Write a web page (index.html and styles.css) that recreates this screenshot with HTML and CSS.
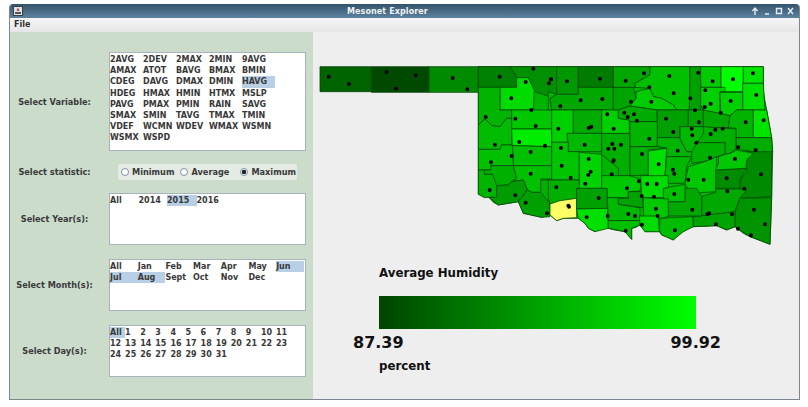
FILE: index.html
```html
<!DOCTYPE html>
<html lang="en">
<head>
<meta charset="utf-8">
<title>Mesonet Explorer</title>
<link rel="stylesheet" href="styles.css">
</head>
<body>
<div class="window">
  <header class="titlebar">
    <svg class="app-icon" width="10" height="10" viewBox="0 0 10 10"><rect x=".5" y=".5" width="9" height="9" fill="#dfe3e6" stroke="#3a3f44"/><path d="M5 1.800 6.500 4.800H3.500z" fill="#a33"/><path d="M2 6h6v2H2z" fill="#50565c"/></svg>
    <div class="title">Mesonet Explorer</div>
    <div class="controls">
      <svg width="46" height="10" viewBox="0 0 46 10"><g fill="none" stroke="#e6edf2" stroke-width="1.400"><path d="M4 9V3M1.500 5 4 2l2.500 3"/><path d="M14 8h4"/><path d="M25.500 2.500h5v5h-5z"/><path d="M37 2l5 6M42 2l-5 6"/></g></svg>
    </div>
  </header>
  <nav class="menubar"><span class="menu-item">File</span></nav>
  <main class="content">
    <section class="controls-panel">
      <div class="row row-variable">
        <div class="label">Select Variable:</div>
        <div class="list list-variable">
          <span>2AVG</span><span>2DEV</span><span>2MAX</span><span>2MIN</span><span>9AVG</span>
          <span>AMAX</span><span>ATOT</span><span>BAVG</span><span>BMAX</span><span>BMIN</span>
          <span>CDEG</span><span>DAVG</span><span>DMAX</span><span>DMIN</span><span class="sel">HAVG</span>
          <span>HDEG</span><span>HMAX</span><span>HMIN</span><span>HTMX</span><span>MSLP</span>
          <span>PAVG</span><span>PMAX</span><span>PMIN</span><span>RAIN</span><span>SAVG</span>
          <span>SMAX</span><span>SMIN</span><span>TAVG</span><span>TMAX</span><span>TMIN</span>
          <span>VDEF</span><span>WCMN</span><span>WDEV</span><span>WMAX</span><span>WSMN</span>
          <span>WSMX</span><span>WSPD</span>
        </div>
      </div>
      <div class="row row-stat">
        <div class="label">Select statistic:</div>
        <div class="radios">
          <span class="radio"><i class="dot"></i>Minimum</span>
          <span class="radio"><i class="dot"></i>Average</span>
          <span class="radio"><i class="dot on"></i>Maximum</span>
        </div>
      </div>
      <div class="row row-list">
        <div class="label">Select Year(s):</div>
        <div class="list list-year">
          <span>All</span><span>2014</span><span class="sel">2015</span><span>2016</span>
        </div>
      </div>
      <div class="row row-list">
        <div class="label">Select Month(s):</div>
        <div class="list list-month">
          <span>All</span><span>Jan</span><span>Feb</span><span>Mar</span><span>Apr</span><span>May</span><span class="sel">Jun</span>
          <span class="sel">Jul</span><span class="sel">Aug</span><span>Sept</span><span>Oct</span><span>Nov</span><span>Dec</span>
        </div>
      </div>
      <div class="row row-list">
        <div class="label">Select Day(s):</div>
        <div class="list list-day">
          <span class="sel">All</span><span>1</span><span>2</span><span>3</span><span>4</span><span>5</span><span>6</span><span>7</span><span>8</span><span>9</span><span>10</span><span>11</span>
          <span>12</span><span>13</span><span>14</span><span>15</span><span>16</span><span>17</span><span>18</span><span>19</span><span>20</span><span>21</span><span>22</span><span>23</span>
          <span>24</span><span>25</span><span>26</span><span>27</span><span>28</span><span>29</span><span>30</span><span>31</span>
        </div>
      </div>
    </section>
    <section class="map-panel">
      <svg class="map" width="480" height="200" viewBox="315 60 480 200">
        <g transform="translate(550 55) scale(.33333)" class="counties">
          <path fill="#00b400" d="M-215 35H640V110L665 248L668 290L665 428L660 568L630 556L600 545L580 535L555 515L530 525L500 512L430 515L415 520L400 530L385 535L370 555L350 545L335 540L328 530H285L270 510L255 518L245 520L245 553L225 530L195 525L175 520L155 515L135 530L115 520L105 505L85 490L40 490L20 497L0 480L-25 487L-80 475L-95 440L-125 445L-155 450L-170 442L-183 427L-215 418z"/>
        </g>
        <g transform="translate(315 55) scale(.33333)" class="counties">
          <path fill="#006400" d="M15 35H169V110H15z"/>
          <path fill="#004a00" d="M169 35H342V112H169z"/>
          <path fill="#008a00" d="M342 35H490V112H342z"/>
          <path fill="#008000" d="M490 35H585L605 65V97H490z"/>
          <path fill="#009000" d="M585 35H740V130L720 130L658 110L640 68H605V65z"/>
          <path fill="#00dc00" d="M555 97H605V68H640L658 105L655 165H555z"/>
          <path fill="#00b400" d="M490 97H555V165L590 165V190H575L555 215L530 212L510 192L490 210z"/>
          <path fill="#00bc00" d="M490 210L510 192L530 212L555 215L575 190H590V270H560L555 283H490z"/>
          <path fill="#00c800" d="M590 165H710V222L590 222z"/>
          <path fill="#00ec00" d="M590 222H710V275L592 272z"/>
          <path fill="#00c000" d="M592 272L710 275V332H595z"/>
          <path fill="#00c000" d="M490 283H555L560 270H592L595 332H527V345H490z"/>
          <path fill="#00b000" d="M527 332H595L605 370L578 390L545 392L535 385L533 358H508V345H527z"/>
          <path fill="#00b400" d="M490 345H508V358H533L545 392V427H522L508 428L490 418z"/>
          <path fill="#00c000" d="M595 332H710V372H677V412H650L637 405L625 375L590 380L605 370z"/>
          <path fill="#009c00" d="M545 392L578 390L590 380L625 375L637 405L610 440L580 445L550 450L522 427H545z"/>
          <path fill="#00a000" d="M637 405L650 412H677L705 430V485L680 487L625 475L610 440z"/>
          <path fill="#00b000" d="M677 375H740V432L705 445L677 412z"/>
        </g>
        <g transform="translate(550 55) scale(.33333)" class="counties">
          <path fill="#00b400" d="M-5 110L20 118H85V165H5L-5 165z"/>
          <path fill="#009800" d="M20 35H85V118H20z"/>
          <path fill="#007c00" d="M85 35H190V97H85z"/>
          <path fill="#00a800" d="M20 118H85V97H190V165H5L0 130z"/>
          <path fill="#00d000" d="M5 165H70V235H52V262H5z"/>
          <path fill="#00ac00" d="M70 165H155V235H70z"/>
          <path fill="#00b800" d="M52 235H155V290H55z"/>
          <path fill="#00c400" d="M5 262H55V290H88V375H5z"/>
          <path fill="#00b000" d="M-5 375H88V400H80V430L0 447L-5 432z"/>
          <path fill="#ffff66" d="M0 447L30 437L80 430V488L40 490L20 497L10 488L0 480z"/>
          <path fill="#00d400" d="M88 292L155 298V400H88z"/>
          <path fill="#00a000" d="M80 400H172V460L80 462z"/>
          <path fill="#00e000" d="M80 462L172 460L175 520L135 530L115 520L105 505L85 490z"/>
          <path fill="#00b000" d="M155 235H240V362H205V340L155 298z"/>
          <path fill="#00d000" d="M155 165H205V190L238 195V235H155z"/>
          <path fill="#00c800" d="M155 362H205L240 362L275 375L270 408L235 410V428H172V400H155z"/>
          <path fill="#00b800" d="M172 428H205V448L270 458V497H175z"/>
          <path fill="#00c000" d="M175 497H270V510L245 520L245 553L225 530L175 520z"/>
          <path fill="#00a400" d="M205 430H235V410H275L280 458L205 448z"/>
          <path fill="#00a400" d="M190 97H250L258 130V150L240 153L205 165H190z"/>
          <path fill="#00a800" d="M190 35H300V60L255 85V97H190z"/>
          <path fill="#00c000" d="M300 35H420L418 165H380L370 150L335 130L310 125L300 100L255 97V85L300 60z"/>
          <path fill="#00cc00" d="M258 110L300 100L310 125L335 130L370 150L380 165H320L240 153L258 130z"/>
          <path fill="#00ac00" d="M205 165L240 153L320 165L322 200H240L238 195L205 190z"/>
          <path fill="#00a000" d="M420 35H452V165H418z"/>
          <path fill="#00cc00" d="M452 35H513V97H452z"/>
          <path fill="#00ff00" d="M513 35H580V85L578 110H513z"/>
          <path fill="#00e400" d="M580 35H640V85H580z"/>
          <path fill="#00e000" d="M578 85H640L645 165H578z"/>
          <path fill="#00d000" d="M452 97H525V110H510V178L460 165L452 150z"/>
          <path fill="#00d000" d="M510 112H578V165L560 165L540 182L512 178z"/>
          <path fill="#00a000" d="M322 165H415V215H390L388 248H322z"/>
          <path fill="#00a800" d="M415 165H460V215H415z"/>
          <path fill="#00a800" d="M460 165L510 175L540 182L535 218H460z"/>
          <path fill="#00b400" d="M540 182L560 165H610V248H558V220L535 218z"/>
          <path fill="#00e400" d="M610 165H650L665 248H610z"/>
          <path fill="#00ac00" d="M558 248H665L668 290L640 300L610 290L580 285L560 285z"/>
          <path fill="#00b400" d="M240 200H322V275L240 275z"/>
          <path fill="#00b400" d="M322 248H388L410 290H425V305H350V280L322 275z"/>
          <path fill="#00b800" d="M390 215H460L465 235L442 290H410L390 250z"/>
          <path fill="#00b000" d="M460 215L558 222V280L540 295L525 298V263H442L460 235z"/>
          <path fill="#00b000" d="M425 290L442 263H525V298L500 305L470 318L425 325z"/>
          <path fill="#00b000" d="M240 275H322L350 280L295 285V360L240 362z"/>
          <path fill="#00e000" d="M295 288L350 280L345 365H295z"/>
          <path fill="#00b800" d="M350 305H425L410 335L405 385H345V362z"/>
          <path fill="#00c800" d="M415 335L470 318L500 305L497 410L420 415L405 385z"/>
          <path fill="#008a00" d="M590 290H665V425L570 430L570 375L590 350z"/>
          <path fill="#008c00" d="M497 345L588 340L570 375V400H497z"/>
          <path fill="#00c800" d="M505 305L525 298L540 295L560 285L610 295L590 315L588 340L497 345L505 325z"/>
          <path fill="#00a800" d="M497 402H570L590 405L570 430L555 470L455 485V425L497 412z"/>
          <path fill="#009400" d="M570 430L665 428L660 568L600 545L555 515V470z"/>
          <path fill="#00a400" d="M430 485L555 470V515L530 525L500 512L430 515z"/>
          <path fill="#00bc00" d="M330 490L428 485L430 515L400 530L370 555L335 540L328 525z"/>
          <path fill="#00a800" d="M355 440H405V400H440L455 425V483H355z"/>
          <path fill="#00c000" d="M340 400L405 388V440H340z"/>
          <path fill="#00dc00" d="M272 362H355V398L340 400V428H275z"/>
          <path fill="#00c800" d="M280 428L355 432V485L330 490L280 483z"/>
          <path fill="#00dc00" d="M268 483H325L328 530H285L270 510z"/>
        </g>
        <g transform="translate(315 55) scale(.33333)" class="dots">
          <path d="M41 65h0M102 87h0M215 51h0M302 61h0M243 101h0M413 69h0M457 103h0M554 65h0M655 41h0M708 73h0M702 85h0M632 81h0M589 130h0M649 165h0M512 186h0M601 191h0M662 213h0M540 269h0M613 261h0M690 272h0M647 291h0M590 303h0M528 322h0M647 356h0M524 405h0M601 421h0M632 443h0M696 475h0"/>
        </g>
        <g transform="translate(550 55) scale(.33333)" class="dots">
          <path d="M3 73h0M51 79h0M150 71h0M227 77h0M282 55h0M358 63h0M445 53h0M488 79h0M549 73h0M609 55h0M298 97h0M371 115h0M466 106h0M92 136h0M157 132h0M243 140h0M304 140h0M421 130h0M482 146h0M464 156h0M542 138h0M619 120h0M31 154h0M435 166h0M512 173h0M172 178h0M223 173h0M233 186h0M252 178h0M261 197h0M348 191h0M447 202h0M587 202h0M641 196h0M25 221h0M116 219h0M124 215h0M191 221h0M370 231h0M425 221h0M427 241h0M482 237h0M496 224h0M518 221h0M298 251h0M104 269h0M187 267h0M213 269h0M175 281h0M193 281h0M439 263h0M33 279h0M276 297h0M383 287h0M565 277h0M617 285h0M116 312h0M191 316h0M190 319h0M480 308h0M555 312h0M35 332h0M326 328h0M369 344h0M373 356h0M122 350h0M115 360h0M185 358h0M62 368h0M415 374h0M461 374h0M530 370h0M633 358h0M267 379h0M106 386h0M292 387h0M320 387h0M19 397h0M231 400h0M583 401h0M532 409h0M373 417h0M275 423h0M312 425h0M146 429h0M55 452h0M57 455h0M318 461h0M427 464h0M478 475h0M472 478h0M546 478h0M612 464h0M235 477h0M255 483h0M173 483h0M110 487h0M323 483h0M276 509h0M498 508h0M645 508h0M564 521h0M227 527h0M375 526h0M603 541h0"/>
        </g>
      </svg>
      <div class="legend">
        <div class="legend-title">Average Humidity</div>
        <div class="legend-bar"></div>
        <div class="legend-values"><span>87.39</span><span>99.92</span></div>
        <div class="legend-unit">percent</div>
      </div>
    </section>
  </main>
</div>
</body>
</html>
```

FILE: styles.css
```css
* { box-sizing: border-box; }
html, body { margin: 0; padding: 0; background: #fff; }
body { width: 808px; height: 407px; overflow: hidden; font-family: "DejaVu Sans", sans-serif; }

.window {
  width: 791px;
  height: 396px;
  margin: 4px 0 0 9px;
  border: 1px solid #7d868c;
  border-top: 0;
  border-radius: 4px 4px 0 0;
  display: flex;
  flex-direction: column;
  overflow: hidden;
}

.titlebar {
  height: 14px;
  flex: none;
  background: linear-gradient(#33536b, #5d829e);
  display: flex;
  align-items: center;
  padding-left: 3px;
}
.app-icon { display: block; }
.title {
  margin-left: 324px;
  font-size: 8px;
  font-weight: 700;
  color: #eef2f5;
  letter-spacing: .1px;
  white-space: nowrap;
}
.controls { margin-left: auto; margin-right: 2px; height: 10px; }
.controls svg { display: block; }

.menubar {
  height: 14px;
  flex: none;
  background: linear-gradient(#f6f6f6, #e6e6e6);
  padding-left: 4px;
  font-size: 8px;
  font-weight: 700;
  line-height: 13px;
  color: #333;
}

.content { flex: 1; display: flex; min-height: 0; }

.controls-panel {
  width: 303px;
  flex: none;
  background: #cbdccb;
  padding-top: 20px;
  display: flex;
  flex-direction: column;
}
.row { display: grid; grid-template-columns: 89px 197px; column-gap: 10px; align-items: center; }
.row-variable { height: 99px; }
.row-stat { height: 16px; margin-top: 13px; }
.row-list { height: 52px; margin-top: 14px; }
.row-stat + .row-list { margin-top: 13px; }
.label { text-align: center; font-size: 8.200px; font-weight: 700; color: #3a3a3a; white-space: nowrap; }

.list {
  height: 100%;
  background: #fff;
  border: 1px solid #a8b4bd;
  padding: 1px 0 0 0;
  display: grid;
  grid-auto-rows: 11.200px;
  align-content: start;
  font-size: 8px;
  font-weight: 700;
  color: #383838;
  line-height: 11px;
}
.list span { white-space: nowrap; }
.list .sel { background: #b8cfe5; }
.list-variable { grid-template-columns: repeat(5, 33px); }
.list-year { grid-template-columns: 28.500px 28.500px 29.500px 29.500px; }
.list-month { grid-template-columns: repeat(7, 27.700px); }
.list-day { grid-template-columns: repeat(12, 15.100px); }

.radios {
  margin-left: 9px;
  width: 179px;
  height: 16px;
  background: #e3ebe3;
  border-radius: 2px;
  display: flex;
  align-items: center;
  gap: 6px;
  padding-left: 3px;
  font-size: 8.200px;
  font-weight: 700;
  color: #3a3a3a;
}
.radio { display: flex; align-items: center; gap: 3px; white-space: nowrap; }
.radio:last-child { margin-left: 5px; }
.dot {
  width: 8px;
  height: 8px;
  border-radius: 50%;
  border: 1px solid #7d93a8;
  background: #fff;
  display: block;
}
.dot.on { background: radial-gradient(circle, #222 0 2px, #fff 2.600px); }

.map-panel {
  flex: 1;
  background: #eee;
  padding: 0 0 0 2px;
  display: flex;
  flex-direction: column;
}
.map { display: block; margin-top: 28px; flex: none; }
.counties path { stroke: #064a06; stroke-width: 2.400; stroke-linejoin: round; }
.dots path { stroke: #000; stroke-width: 12; stroke-linecap: round; fill: none; }

.legend { margin: 6px 0 0 64px; width: 320px; color: #111; font-weight: 700; }
.legend-title { font-size: 11.800px; line-height: 14px; }
.legend-bar {
  width: 317px;
  height: 33px;
  margin-top: 16px;
  background: linear-gradient(90deg, #004400, #00ff00);
}
.legend-values {
  width: 368px;
  margin-left: -26px;
  display: flex;
  justify-content: space-between;
  font-size: 16px;
  line-height: 19px;
  margin-top: 4px;
}
.legend-unit { font-size: 11.800px; line-height: 14px; margin-top: 7px; }
```
